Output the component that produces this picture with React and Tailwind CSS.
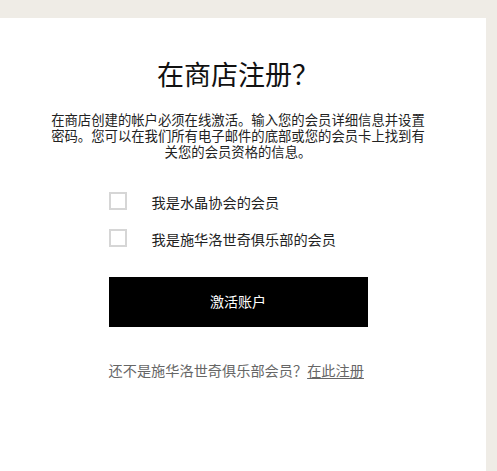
import { useState } from "react";

function Box({ checked, onToggle, label }) {
  return (
    <label className="flex items-start cursor-pointer">
      <span
        onClick={onToggle}
        className={
          checked
            ? "w-[18px] h-[18px] border-2 border-[#d6d6d6] bg-black shrink-0"
            : "w-[18px] h-[18px] border-2 border-[#d6d6d6] bg-white shrink-0"
        }
      />
      <span className="ml-[25px] mt-[2px] text-[14.2px] leading-[18px] text-[#222]">{label}</span>
    </label>
  );
}

export default function App() {
  const [crystal, setCrystal] = useState(false);
  const [club, setClub] = useState(false);

  return (
    <main className="h-[471px] w-full bg-[#efece6] pt-[18px] overflow-hidden font-['Liberation_Sans','Noto_Sans_CJK_SC',sans-serif]">
      <section className="w-[486px] h-full bg-white pr-[10px] flex flex-col items-center">
        <h1 className="mt-[42px] text-[27px] leading-[32px] text-[#111] font-normal">在商店注册？</h1>
        <p className="mt-[21px] w-[380px] text-center text-[13.35px] leading-[16px] text-[#222]">
          在商店创建的帐户必须在线激活。输入您的会员详细信息并设置密码。您可以在我们所有电子邮件的底部或您的会员卡上找到有关您的会员资格的信息。
        </p>

        <div className="w-[259px] mt-[31px] flex flex-col gap-[17px]">
          <Box checked={crystal} onToggle={() => setCrystal(!crystal)} label="我是水晶协会的会员" />
          <Box checked={club} onToggle={() => setClub(!club)} label="我是施华洛世奇俱乐部的会员" />
        </div>

        <button className="mt-[28px] w-[259px] h-[50px] bg-black text-white text-[14px]">激活账户</button>

        <div className="mt-[34px] w-[259px] text-[14.2px] leading-[20px] text-[#666] whitespace-nowrap">
          还不是施华洛世奇俱乐部会员？<a href="#" className="underline underline-offset-2">在此注册</a>
        </div>
      </section>
    </main>
  );
}
